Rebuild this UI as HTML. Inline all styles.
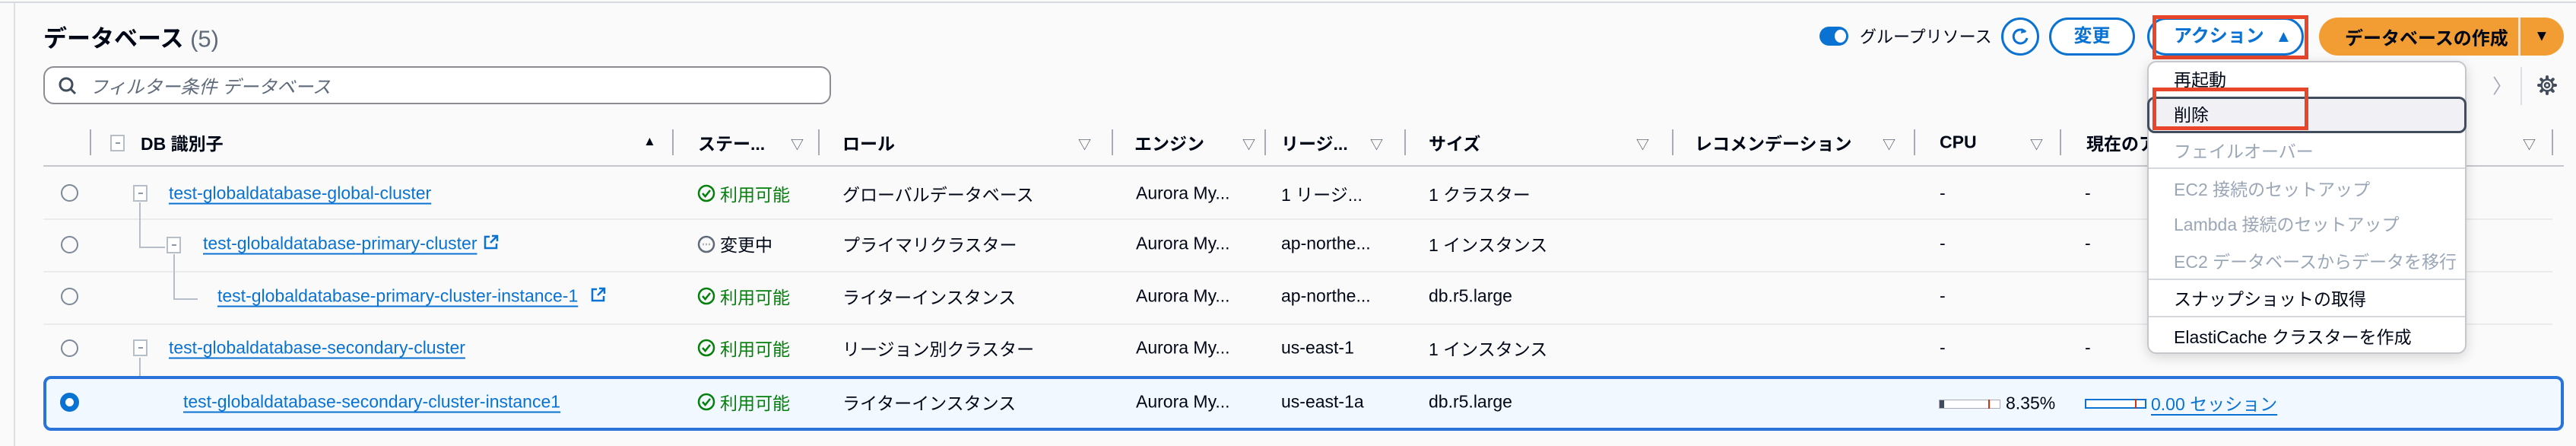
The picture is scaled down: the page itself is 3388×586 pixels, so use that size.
<!DOCTYPE html>
<html><head><meta charset="utf-8"><style>
*{margin:0;padding:0;box-sizing:border-box}
body{width:3388px;height:586px;background:#fafafa;font-family:"Liberation Sans","Noto Sans CJK JP",sans-serif;font-size:23px;color:#000716;position:relative;overflow:hidden}
.a{position:absolute;white-space:nowrap}
.c{transform:translateY(-50%)}
.lk{color:#0972d3;text-decoration:underline;text-decoration-thickness:2px;text-underline-offset:5px}
.hd{font-weight:bold}
.sep{position:absolute;width:2px;height:34px;top:170px;background:#aab}
.tri{position:absolute;font-size:17px;color:#414d5c}
.rowl{position:absolute;left:57px;width:3300px;height:2px;background:#e9ebed}
.radio{position:absolute;left:80px;width:23px;height:23px;border:2px solid #7d8998;border-radius:50%}
.sq{position:absolute;width:19px;height:22px;border:2px solid #b6bec9;background:#fff}
.sq:after{content:"";position:absolute;left:5px;top:8px;width:6px;height:2px;background:#8d99a8}
.ok{color:#037f0c}
.mi{position:absolute;left:2859px}
.dis{color:#9ba7b6}
</style></head><body>
<div class="a" style="left:0;top:2px;width:3388px;height:2px;background:#d5d8dc"></div>
<div class="a" style="left:18px;top:4px;width:2px;height:582px;background:#dcdfe3"></div>

<div class="a c" style="left:57px;top:48px;font-size:31px;font-weight:bold">データベース <span style="font-weight:normal;color:#5f6b7a">(5)</span></div>

<div class="a" style="left:57px;top:87px;width:1036px;height:50px;border:2px solid #8c8c94;border-radius:14px;background:#fff"></div>
<svg class="a" style="left:76px;top:100px" width="26" height="26" viewBox="0 0 26 26"><circle cx="11" cy="11" r="8" fill="none" stroke="#414d5c" stroke-width="3"/><path d="M17 17l6 6" stroke="#414d5c" stroke-width="3"/></svg>
<div class="a c" style="left:118px;top:112px;color:#5f6b7a;font-style:italic;font-size:24px">フィルター条件 データベース</div>

<!-- toolbar -->
<div class="a" style="left:2393px;top:35px;width:38px;height:25px;border-radius:13px;background:#0972d3"></div>
<div class="a" style="left:2413px;top:39px;width:15px;height:17px;border-radius:50%;background:#fff"></div>
<div class="a c" style="left:2446px;top:47px;font-size:22px">グループリソース</div>
<div class="a" style="left:2632px;top:23px;width:50px;height:50px;border:3px solid #0972d3;border-radius:50%;background:#fff"></div>
<svg class="a" style="left:2643px;top:34px" width="28" height="28" viewBox="0 0 28 28"><path d="M21 8A9 9 0 1 0 23 16" fill="none" stroke="#0972d3" stroke-width="3"/><path d="M16 3l6 5-7 2z" fill="#0972d3"/></svg>
<div class="a" style="left:2695px;top:23px;width:113px;height:50px;border:3px solid #0972d3;border-radius:25px;background:#fff;color:#0972d3;font-weight:bold;text-align:center;line-height:44px;font-size:24px">変更</div>
<div class="a" style="left:2824px;top:23px;width:206px;height:50px;border:3px solid #0972d3;border-radius:25px;background:#fff;color:#0972d3;font-weight:bold;line-height:44px;font-size:24px;padding-left:32px">アクション <span style="font-size:22px;margin-left:8px">▲</span></div>
<div class="a" style="left:2831px;top:20px;width:205px;height:58px;border:5px solid #e8462a"></div>
<div class="a" style="left:3050px;top:23px;width:322px;height:50px;border-radius:25px;background:#f29d33"></div>
<div class="a" style="left:3312px;top:23px;width:3px;height:50px;background:#fff;opacity:.7"></div>
<div class="a c" style="left:3084px;top:48px;font-weight:bold;font-size:24px">データベースの作成</div>
<div class="a c" style="left:3333px;top:48px;font-size:20px">▼</div>

<div class="a c" style="left:3278px;top:112px;color:#aab;font-size:26px">〉</div>
<div class="a" style="left:3315px;top:88px;width:2px;height:50px;background:#dcdfe3"></div>
<svg class="a" style="left:3336px;top:98px" width="28" height="28" viewBox="0 0 28 28"><g stroke="#414d5c" stroke-width="4" stroke-linecap="round"><path d="M14 3v4M14 21v4M3 14h4M21 14h4M6.2 6.2l2.8 2.8M19 19l2.8 2.8M6.2 21.8L9 19M19 9l2.8-2.8"/></g><circle cx="14" cy="14" r="7.5" fill="#fafafa" stroke="#414d5c" stroke-width="2.5"/><circle cx="14" cy="14" r="3" fill="none" stroke="#414d5c" stroke-width="2.5"/></svg>

<!-- header -->
<div class="sep" style="left:118px"></div>
<div class="sq" style="left:145px;top:177px"></div>
<div class="a c hd" style="left:185px;top:187px">DB 識別子</div>
<div class="tri" style="left:846px;top:176px;color:#000716">▲</div>
<div class="sep" style="left:884px"></div>
<div class="a c hd" style="left:918px;top:187px">ステー...</div><div class="tri" style="left:1040px;top:176px">▽</div>
<div class="sep" style="left:1076px"></div>
<div class="a c hd" style="left:1108px;top:187px">ロール</div><div class="tri" style="left:1418px;top:176px">▽</div>
<div class="sep" style="left:1462px"></div>
<div class="a c hd" style="left:1492px;top:187px">エンジン</div><div class="tri" style="left:1634px;top:176px">▽</div>
<div class="sep" style="left:1663px"></div>
<div class="a c hd" style="left:1685px;top:187px">リージ...</div><div class="tri" style="left:1802px;top:176px">▽</div>
<div class="sep" style="left:1847px"></div>
<div class="a c hd" style="left:1879px;top:187px">サイズ</div><div class="tri" style="left:2152px;top:176px">▽</div>
<div class="sep" style="left:2199px"></div>
<div class="a c hd" style="left:2229px;top:187px">レコメンデーション</div><div class="tri" style="left:2476px;top:176px">▽</div>
<div class="sep" style="left:2517px"></div>
<div class="a c hd" style="left:2551px;top:187px">CPU</div><div class="tri" style="left:2670px;top:176px">▽</div>
<div class="sep" style="left:2709px"></div>
<div class="a c hd" style="left:2744px;top:187px">現在のア</div><div class="tri" style="left:3318px;top:176px">▽</div>
<div class="sep" style="left:3356px"></div>
<div class="a" style="left:57px;top:217px;width:3315px;height:2px;background:#c6c6cd"></div>

<div class="rowl" style="top:287px"></div>
<div class="rowl" style="top:356px"></div>
<div class="rowl" style="top:425px"></div>

<!-- tree lines -->
<div class="a" style="left:183px;top:266px;width:2px;height:60px;background:#b6bec9"></div>
<div class="a" style="left:183px;top:324px;width:34px;height:2px;background:#b6bec9"></div>
<div class="a" style="left:228px;top:334px;width:2px;height:60px;background:#b6bec9"></div>
<div class="a" style="left:228px;top:392px;width:32px;height:2px;background:#b6bec9"></div>
<div class="a" style="left:183px;top:470px;width:2px;height:60px;background:#b6bec9"></div>
<div class="a" style="left:183px;top:529px;width:32px;height:2px;background:#b6bec9"></div>

<!-- selected -->
<div class="a" style="left:57px;top:494px;width:3315px;height:72px;border:4px solid #2a73d8;border-radius:10px;background:#f1f8ff"></div>

<!-- row1 -->
<div class="radio" style="top:242px"></div>
<div class="sq" style="left:175px;top:243px"></div>
<div class="a c lk" style="left:222px;top:254px">test-globaldatabase-global-cluster</div>
<!-- row2 -->
<div class="radio" style="top:310px"></div>
<div class="sq" style="left:219px;top:311px"></div>
<div class="a c lk" style="left:267px;top:320px">test-globaldatabase-primary-cluster</div>
<!-- row3 -->
<div class="radio" style="top:378px"></div>
<div class="a c lk" style="left:286px;top:389px">test-globaldatabase-primary-cluster-instance-1</div>
<!-- row4 -->
<div class="radio" style="top:446px"></div>
<div class="sq" style="left:175px;top:446px"></div>
<div class="a c lk" style="left:222px;top:457px">test-globaldatabase-secondary-cluster</div>
<!-- row5 -->
<div class="a" style="left:79px;top:516px;width:25px;height:25px;border:7px solid #0972d3;border-radius:50%;background:#fff"></div>
<div class="a c lk" style="left:241px;top:528px">test-globaldatabase-secondary-cluster-instance1</div>

<!-- ext icons -->
<svg class="a" style="left:636px;top:308px" width="20" height="20" viewBox="0 0 20 20"><path d="M8 3H2v15h15v-6M11 2h7v7M18 2l-9 9" fill="none" stroke="#0972d3" stroke-width="2.5"/></svg>
<svg class="a" style="left:777px;top:377px" width="20" height="20" viewBox="0 0 20 20"><path d="M8 3H2v15h15v-6M11 2h7v7M18 2l-9 9" fill="none" stroke="#0972d3" stroke-width="2.5"/></svg>

<!-- status -->
<svg class="a" style="left:917px;top:242px" width="24" height="24" viewBox="0 0 24 24"><circle cx="12" cy="12" r="10" fill="none" stroke="#037f0c" stroke-width="2.5"/><path d="M7 12l3.5 4L17 8" fill="none" stroke="#037f0c" stroke-width="2.5"/></svg>
<div class="a c ok" style="left:947px;top:254px">利用可能</div>
<svg class="a" style="left:917px;top:309px" width="24" height="24" viewBox="0 0 24 24"><circle cx="12" cy="12" r="10" fill="none" stroke="#5f6b7a" stroke-width="2.5"/><path d="M7.5 12h1M11.5 12h1M15.5 12h1" stroke="#5f6b7a" stroke-width="2.5"/></svg>
<div class="a c" style="left:947px;top:320px">変更中</div>
<svg class="a" style="left:917px;top:377px" width="24" height="24" viewBox="0 0 24 24"><circle cx="12" cy="12" r="10" fill="none" stroke="#037f0c" stroke-width="2.5"/><path d="M7 12l3.5 4L17 8" fill="none" stroke="#037f0c" stroke-width="2.5"/></svg>
<div class="a c ok" style="left:947px;top:389px">利用可能</div>
<svg class="a" style="left:917px;top:445px" width="24" height="24" viewBox="0 0 24 24"><circle cx="12" cy="12" r="10" fill="none" stroke="#037f0c" stroke-width="2.5"/><path d="M7 12l3.5 4L17 8" fill="none" stroke="#037f0c" stroke-width="2.5"/></svg>
<div class="a c ok" style="left:947px;top:457px">利用可能</div>
<svg class="a" style="left:917px;top:516px" width="24" height="24" viewBox="0 0 24 24"><circle cx="12" cy="12" r="10" fill="none" stroke="#037f0c" stroke-width="2.5"/><path d="M7 12l3.5 4L17 8" fill="none" stroke="#037f0c" stroke-width="2.5"/></svg>
<div class="a c ok" style="left:947px;top:528px">利用可能</div>

<!-- role -->
<div class="a c" style="left:1108px;top:254px">グローバルデータベース</div>
<div class="a c" style="left:1108px;top:320px">プライマリクラスター</div>
<div class="a c" style="left:1108px;top:389px">ライターインスタンス</div>
<div class="a c" style="left:1108px;top:457px">リージョン別クラスター</div>
<div class="a c" style="left:1108px;top:528px">ライターインスタンス</div>
<!-- engine -->
<div class="a c" style="left:1494px;top:254px">Aurora My...</div>
<div class="a c" style="left:1494px;top:320px">Aurora My...</div>
<div class="a c" style="left:1494px;top:389px">Aurora My...</div>
<div class="a c" style="left:1494px;top:457px">Aurora My...</div>
<div class="a c" style="left:1494px;top:528px">Aurora My...</div>
<!-- region -->
<div class="a c" style="left:1685px;top:254px">1 リージ...</div>
<div class="a c" style="left:1685px;top:320px">ap-northe...</div>
<div class="a c" style="left:1685px;top:389px">ap-northe...</div>
<div class="a c" style="left:1685px;top:457px">us-east-1</div>
<div class="a c" style="left:1685px;top:528px">us-east-1a</div>
<!-- size -->
<div class="a c" style="left:1879px;top:254px">1 クラスター</div>
<div class="a c" style="left:1879px;top:320px">1 インスタンス</div>
<div class="a c" style="left:1879px;top:389px">db.r5.large</div>
<div class="a c" style="left:1879px;top:457px">1 インスタンス</div>
<div class="a c" style="left:1879px;top:528px">db.r5.large</div>
<!-- cpu / current -->
<div class="a c" style="left:2551px;top:254px">-</div><div class="a c" style="left:2742px;top:254px">-</div>
<div class="a c" style="left:2551px;top:320px">-</div><div class="a c" style="left:2742px;top:320px">-</div>
<div class="a c" style="left:2551px;top:389px">-</div>
<div class="a c" style="left:2551px;top:457px">-</div><div class="a c" style="left:2742px;top:457px">-</div>
<div class="a" style="left:2550px;top:525px;width:81px;height:12px;border:1px solid #aab;background:#fff"></div>
<div class="a" style="left:2551px;top:526px;width:6px;height:10px;background:#414d5c"></div>
<div class="a" style="left:2615px;top:525px;width:2px;height:12px;background:#d13212"></div>
<div class="a c" style="left:2638px;top:530px">8.35%</div>
<div class="a" style="left:2742px;top:524px;width:81px;height:13px;border:2px solid #0972d3;background:#fff"></div>
<div class="a" style="left:2808px;top:524px;width:2px;height:13px;background:#d13212"></div>
<div class="a c lk" style="left:2829px;top:529px">0.00 セッション</div>

<!-- dropdown -->
<div class="a" style="left:2824px;top:80px;width:420px;height:385px;background:#fff;border:2px solid #c6c6cd;border-radius:12px;box-shadow:0 4px 16px rgba(0,0,0,.15)"></div>
<div class="mi a c" style="top:103px">再起動</div>
<div class="a" style="left:2824px;top:127px;width:420px;height:48px;border:3px solid #414d5c;border-radius:10px;background:#f0f0f5"></div>
<div class="mi a c" style="top:149px">削除</div>
<div class="a" style="left:2831px;top:115px;width:205px;height:56px;border:5px solid #e8462a"></div>
<div class="mi a c dis" style="top:197px">フェイルオーバー</div>
<div class="a" style="left:2826px;top:220px;width:416px;height:2px;background:#d5d8dc"></div>
<div class="mi a c dis" style="top:247px">EC2 接続のセットアップ</div>
<div class="mi a c dis" style="top:293px">Lambda 接続のセットアップ</div>
<div class="mi a c dis" style="top:342px">EC2 データベースからデータを移行</div>
<div class="a" style="left:2826px;top:366px;width:416px;height:2px;background:#d5d8dc"></div>
<div class="mi a c" style="top:391px">スナップショットの取得</div>
<div class="a" style="left:2826px;top:415px;width:416px;height:2px;background:#d5d8dc"></div>
<div class="mi a c" style="top:441px">ElastiCache クラスターを作成</div>
</body></html>
